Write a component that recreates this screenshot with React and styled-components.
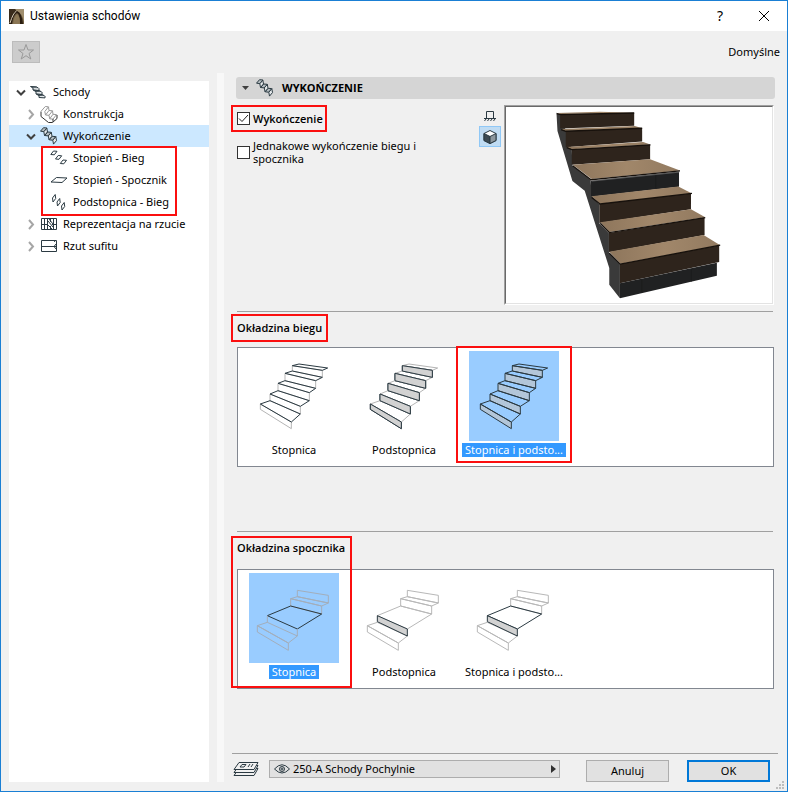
import React, { useState } from 'react';
import styled, { createGlobalStyle, css } from 'styled-components';

const Global = createGlobalStyle`
  * { box-sizing: border-box; }
  body { margin: 0; background: #f0f0f0; }
  body, button, select, input { font-family: "Noto Sans", "Open Sans", sans-serif; font-size: 11px; line-height: 14px; color: #000; }
  button { border: 0; padding: 0; background: none; }
  svg { display: block; flex: none; }
`;

const Window = styled.div`
  display: flex;
  flex-direction: column;
  min-height: 100vh;
  border: 1px solid #1a7fd4;
  background: #f0f0f0;
`;
const TitleBar = styled.header`
  display: flex;
  align-items: center;
  height: 30px;
  padding: 0 13px 0 8px;
  gap: 6px;
  background: #fff;
`;
const Title = styled.h1`
  flex: 1;
  margin: 0;
  font-size: 12px;
  font-family: Roboto, sans-serif;
  font-weight: 400;
  line-height: 16px;
`;
const CaptionButton = styled.button`
  display: grid;
  place-items: center;
  width: 20px;
  height: 20px;
  margin-left: 18px;
  font-size: 14px;
`;
const Toolbar = styled.div`
  display: flex;
  align-items: center;
  justify-content: space-between;
  height: 42px;
  padding: 0 7px 0 11px;
`;
const FavouriteButton = styled.button`
  display: grid;
  place-items: center;
  width: 28px;
  height: 22px;
  border: 1px solid #bcbcbc;
  background: #ccc;
`;
const Body = styled.div`
  display: flex;
  flex: 1;
  padding: 0 0 9px 8px;
`;
const Tree = styled.nav`
  width: 200px;
  margin-top: 8px;
  background: #fff;
`;
const TreeGroup = styled.div`
  position: relative;
`;
const TreeRow = styled.button`
  display: flex;
  align-items: center;
  width: 100%;
  height: 22px;
  padding-left: ${(p) => 6 + p.$level * 10}px;
  background: ${(p) => (p.$selected ? '#cce8ff' : 'transparent')};
  text-align: left;
`;
const Twisty = styled.span`
  width: 12px;
  margin-right: 3px;
`;
const TreeIcon = styled.span`
  width: ${(p) => (p.$root ? 16 : 18)}px;
  margin-right: ${(p) => (p.$root ? 7 : 5)}px;
`;
const Splitter = styled.div`
  width: 7px;
  margin-left: 8px;
  background: #f8f8f8;
`;
const Main = styled.main`
  display: flex;
  flex: 1;
  flex-direction: column;
  min-width: 0;
  padding: 4px 9px 0 8px;
`;
const PanelHeader = styled.button`
  display: flex;
  align-items: center;
  height: 22px;
  margin: 0 3px 0 4px;
  padding-left: 5px;
  border-radius: 3px;
  background: #d5d5d5;
  font-family: "Open Sans", sans-serif;
  font-weight: 700;
`;
const HeaderIcon = styled.span`
  margin: 0 8px 0 6px;
`;
const Section = styled.section`
  margin: 0 5px;
  padding-bottom: ${(p) => p.$space}px;
  border-bottom: ${(p) => (p.$last ? '0' : '1px solid #a0a0a0')};
`;
const Finish = styled.div`
  display: flex;
  padding-top: 6px;
`;
const Options = styled.div`
  flex: 1;
  min-width: 0;
  padding-top: 7px;
`;
const CheckLabel = styled.label`
  position: relative;
  display: flex;
  align-items: center;
  gap: 3px;
  max-width: 196px;
  margin-bottom: 14px;
  line-height: 13px;
  ${(p) => p.$bold && css`font-family: "Open Sans", sans-serif; font-weight: 600;`}
`;
const CheckBox = styled.input`
  appearance: none;
  flex: none;
  width: 13px;
  height: 13px;
  margin: 0;
  border: 1px solid #333;
  background: #fff;
  &:checked {
    background: #fff url("data:image/svg+xml,%3Csvg xmlns='http://www.w3.org/2000/svg' viewBox='0 0 11 11'%3E%3Cpath d='M1 5.5l3 3 6-6.500' fill='none' stroke='%23222'/%3E%3C/svg%3E");
  }
`;
const ViewModes = styled.div`
  display: flex;
  flex-direction: column;
  margin-right: 3px;
`;
const ViewButton = styled.button`
  display: grid;
  place-items: center;
  width: 22px;
  height: 21px;
  border: 1px solid ${(p) => (p.$active ? '#90c8f6' : 'transparent')};
  background: ${(p) => (p.$active ? '#c0dcf3' : 'transparent')};
`;
const Preview = styled.div`
  width: 270px;
  height: 200px;
  margin-right: -1px;
  border: 1px solid;
  border-color: #a0a0a0 #fff #fff #a0a0a0;
  background: #fff;
`;
const PreviewInner = styled.div`
  border: 1px solid;
  border-color: #696969 #e3e3e3 #e3e3e3 #696969;
`;
const SectionTitle = styled.h2`
  margin: 0;
  padding: 9px 0 12px;
  font-family: "Open Sans", sans-serif;
  font-size: 11px;
  font-weight: 600;
  line-height: 14px;
`;
const TitleMark = styled.span`
  position: relative;
`;
const TileList = styled.div`
  position: relative;
  display: flex;
  height: 120px;
  margin-top: ${(p) => p.$gap}px;
  margin-right: -1px;
  padding: 3px 1px;
  border: 1px solid #828790;
  background: #fff;
`;
const Tile = styled.button`
  position: relative;
  display: flex;
  flex-direction: column;
  align-items: center;
  gap: 2px;
  width: 110px;
`;
const TileImage = styled.span`
  width: 90px;
  height: 90px;
  background: ${(p) => (p.$selected ? '#99ccff' : 'transparent')};
`;
const TileLabel = styled.span`
  padding: 0 3px;
  line-height: 14px;
  white-space: nowrap;
  ${(p) => p.$selected && css`background: #3399ff; color: #fff;`}
`;
const Mark = styled.span`
  position: absolute;
  inset: ${(p) => p.$inset};
  z-index: 2;
  border: 2px solid #fb0f0f;
  pointer-events: none;
`;
const Footer = styled.footer`
  display: flex;
  align-items: flex-start;
  margin-top: auto;
  padding-top: 6px;
  border-top: 1px solid #a0a0a0;
`;
const LayerBox = styled.label`
  display: flex;
  align-items: center;
  flex: 0 1 291px;
  height: 18px;
  margin: 0 26px 0 9px;
  padding: 0 3px 0 4px;
  border: 1px solid #adadad;
  background: #e1e1e1;
`;
const LayerSelect = styled.select`
  appearance: none;
  flex: 1;
  min-width: 0;
  padding: 0 0 0 3px;
  border: 0;
  background: transparent;
`;
const DialogButton = styled.button`
  width: 83px;
  height: 22px;
  margin-right: ${(p) => (p.$primary ? 8 : 18)}px;
  border: ${(p) => (p.$primary ? '2px solid #0078d7' : '1px solid #adadad')};
  background: #e1e1e1;
`;
const Grip = styled.span`
  position: absolute;
  right: 4px;
  bottom: 3px;
`;
const Frame = styled.div`
  position: relative;
`;

const INK = '#2b3a42';

const Arrow = ({ open }) => (
  <svg width="12" height="12" viewBox="0 0 12 12" fill="none" strokeWidth="2" stroke={open ? '#404040' : '#a6a6a6'}>
    <path d={open ? 'M2 4.500l4 4 4-4' : 'M4 2l4 4.500-4 4.500'} />
  </svg>
);

const FlightIcon = () => (
  <svg width="18" height="18" viewBox="0 0 18 18" stroke={INK} strokeLinejoin="round">
    <path d="M3.800 4.600l3-3.600.7 4-3 3.500zM8.300 8.900l3-3.600.7 4-3 3.500zM12.800 13.200l3-3.600.7 4-3 3.500z" fill="#e4e8ea" />
    <path d="M.500 4.200l3-3.500 3.500.3-3.200 3.600zM4.700 8.500l3-3.500 3.500.3-3 3.600zM9.200 12.800l3-3.500 3.500.3-3 3.600z" fill="#b4bcc0" />
  </svg>
);

const icons = {
  stairs: (
    <svg width="16" height="14" viewBox="0 0 16 14" stroke={INK} fill="#a3abaf" strokeLinejoin="round">
      <path d="M.500 1.500l6 .3 2 1.500-5.500-.3z" />
      <path d="M3 3v2l6 .7V3.300" fill="#e4e8ea" />
      <path d="M3.500 5.200l6 .3 2 1.500-5.500-.3z" />
      <path d="M6 7v2l6 .6V7" fill="#e4e8ea" />
      <path d="M6.500 9.200l6 .3 2 1.500-5.500-.3z" />
      <path d="M9 11v1.500l6 .4V11" fill="#e4e8ea" />
    </svg>
  ),
  structure: (
    <svg width="18" height="18" viewBox="0 0 18 18" fill="#fff" strokeLinejoin="round">
      <path d="M1 6l4-4.500 3.500.5.5 3 3.500.5.5 3 3.500.5.5 4-4 4.500H9L1.500 11z" stroke="none" />
      <path d="M1.300 6l4-4.500 3.200.3-3.700 4.700.7 3.500 3.500-4.500-.5-3.500M9 5.500l3.500.3-3.500 4.500-3.500-.3M9 10.300l.7 3.500 3.300-4.500-.5-3.500M13 9.300l3.500.3-3.500 4.500-3.300-.3" stroke="#999" fill="none" />
      <path d="M1 6.500v5l7.500 6h4l4.500-4v-3.500M13 17v-3" stroke="#333" fill="none" />
    </svg>
  ),
  finish: <FlightIcon />,
  treads: (
    <svg width="18" height="18" viewBox="0 0 18 18" fill="#fff" stroke={INK}>
      <path d="M.800 5.500l2.700-3.500 3.500.3-2.700 3.500zM5.500 10l2.700-3.500 3.500.3L9 10.300zM10.300 14.500l2.700-3.500 3.500.3-2.700 3.500z" />
    </svg>
  ),
  landing: (
    <svg width="18" height="18" viewBox="0 0 18 18" fill="#fff" stroke={INK}>
      <path d="M1 11l5.500-4.500L17 7l-5 4.500z" />
    </svg>
  ),
  risers: (
    <svg width="18" height="18" viewBox="0 0 18 18" fill="#fff" stroke={INK}>
      <path d="M2.500 5l2.700-3.500.5 4L3 9zM7 9l2.700-3.500.5 4L7.500 13zM11.500 13l2.700-3.500.5 4L12 17z" />
    </svg>
  ),
  plan: (
    <svg width="18" height="14" viewBox="0 0 18 14" fill="none" stroke={INK}>
      <path d="M1.500 1.500h15v11h-15zM4.500 1v12M7.500 1v12M10.500 1v4M10.500 9v4M13.500 1v12M1 7.500h7M12 7.500h5M8 4l5 6M9 2l4 5M8 8l4 4" />
    </svg>
  ),
  ceiling: (
    <svg width="18" height="14" viewBox="0 0 18 14" fill="none" stroke={INK}>
      <path d="M1.500 1.500h15v11h-15zM1 7.500h15M13.500 1l1.500 2M16 5l-2 2.500 2 2.500" />
    </svg>
  ),
};

const flightRisers = [
  '130,44 220,58 220,79 130,60',
  '108,67 200,89 200,112 108,89',
  '87,97 181,125 181,149 87,119',
  '63,129 154,166 154,189 63,149',
  '34,159 127,213 127,233 34,175',
];
const flightTreads = [
  '130,44 150,39 236,51 220,58',
  '130,60 108,67 200,89 220,79',
  '108,89 87,97 181,125 200,112',
  '87,119 63,129 154,166 181,149',
  '63,149 34,159 127,213 154,189',
];
const landingParts = [
  '145,52 238,67 238,90 145,71',
  '145,71 125,77 218,99 238,90',
  '125,77 125,99 218,123 218,99',
  '55,148 25,158 118,210 145,189',
  '25,158 118,210 118,232 25,177',
];

const polys = (list, props) => list.map((points) => <polygon key={points} points={points} {...props} />);

function FlightDrawing({ kind, selected }) {
  const pale = { fill: 'none', stroke: '#b5b5b5' };
  const dark = { fill: 'none', stroke: INK };
  const face = { fill: selected ? '#b3c6d9' : '#d2d2d2', stroke: INK };
  return (
    <svg width="90" height="90" viewBox="0 0 270 270" strokeWidth="3" strokeLinejoin="round">
      {polys(flightRisers, kind === 'tread' ? pale : face)}
      {kind === 'riser' && polys(flightTreads, pale)}
      {kind === 'riser' && polys(flightRisers, face)}
      {kind !== 'riser' && polys(flightTreads, dark)}
    </svg>
  );
}

function LandingDrawing({ kind, selected }) {
  const pale = { fill: 'none', stroke: selected ? '#a3aebb' : '#b8b8b8' };
  const dark = { fill: 'none', stroke: INK };
  return (
    <svg width="90" height="90" viewBox="0 0 270 270" strokeWidth="3" strokeLinejoin="round">
      {polys(landingParts, pale)}
      <polygon points="125,99 218,123 145,168 55,128" {...(kind === 'riser' ? pale : dark)} />
      {kind === 'tread' ? (
        <path d="M55 128v20M145 168v21" {...pale} />
      ) : (
        <polygon points="55,128 145,168 145,189 55,146" fill="#d2d2d2" stroke={INK} />
      )}
    </svg>
  );
}

const StairsPreview = () => (
  <svg width="100%" height="196" viewBox="18 21 801 588" role="img" aria-label="Podgląd schodów">
    <defs>
      <linearGradient id="wood" x1="0" x2="1">
        <stop offset="0" stopColor="#8e765c" />
        <stop offset=".5" stopColor="#a1876a" />
        <stop offset="1" stopColor="#927a60" />
      </linearGradient>
    </defs>
    <path d="M170 37L182 42 198 90 216 147 218 196 273 240 276 290 299 313 299 370 328 400 328 458 361 493 361 596 329 555 329 505 255 272 218 243 173 92z" fill="#3a3a3a" />
    <g fill="#2e241c">
      <path d="M181 41l223-4v39l-223 9z" />
      <path d="M198 92l230-9v41l-230 17z" />
      <path d="M216 148l236-15v44l-236 17z" />
      <path d="M299 312l276-33v49l-276 41z" />
      <path d="M328 399l288-46v52l-288 52z" />
      <path d="M361 493l299-57v51l-299 64z" />
    </g>
    <path d="M274 242l265-28v46l-265 30zM361 551l292-62v39l-292 68z" fill="#202122" />
    <path d="M469 225v38M427 540v38M576 508v38" stroke="#18191a" strokeWidth="2" />
    <g fill="url(#wood)">
      <path d="M171 38l130-4 103 3-222 4z" />
      <path d="M184 86l222-9 22 7-231 8z" />
      <path d="M201 140l230-15 22 8-236 14z" />
      <path d="M219 194l233-17 90 34-266 26z" />
      <path d="M276 289l261-30 41 21-277 31z" />
      <path d="M302 367l273-39 43 24-289 44z" />
      <path d="M329 456l284-51 50 31-300 56z" />
    </g>
    <g fill="none" stroke="#17110c" strokeWidth="4">
      <path d="M171 40l11 3 222-5M184 88l14 5 230-9M201 142l15 6 237-14M219 197l55 42 268-27" />
      <path d="M276 292l25 20 277-32M302 370l27 28 289-45M329 460l33 33 301-57" />
    </g>
    <path d="M276 243l264-27" stroke="#777" strokeWidth="2" />
  </svg>
);

const treeTop = [
  { label: 'Schody', icon: 'stairs', level: 0, open: true },
  { label: 'Konstrukcja', icon: 'structure', level: 1 },
  { label: 'Wykończenie', icon: 'finish', level: 1, open: true, selected: true },
];
const treeMarked = [
  { label: 'Stopień - Bieg', icon: 'treads', level: 2, leaf: true },
  { label: 'Stopień - Spocznik', icon: 'landing', level: 2, leaf: true },
  { label: 'Podstopnica - Bieg', icon: 'risers', level: 2, leaf: true },
];
const treeBottom = [
  { label: 'Reprezentacja na rzucie', icon: 'plan', level: 1 },
  { label: 'Rzut sufitu', icon: 'ceiling', level: 1 },
];

const TreeItem = ({ item }) => (
  <TreeRow $level={item.level} $selected={item.selected}>
    <Twisty>{!item.leaf && <Arrow open={item.open} />}</Twisty>
    <TreeIcon $root={item.level === 0}>{icons[item.icon]}</TreeIcon>
    {item.label}
  </TreeRow>
);

const tiles = [
  { kind: 'tread', label: 'Stopnica' },
  { kind: 'riser', label: 'Podstopnica' },
  { kind: 'both', label: 'Stopnica i podsto...' },
];

function Tiles({ drawing: Drawing, initial, mark, gap }) {
  const [value, setValue] = useState(initial);
  return (
    <TileList $gap={gap}>
      {tiles.map(({ kind, label }) => (
        <Tile key={kind} aria-pressed={value === kind} onClick={() => setValue(kind)}>
          <TileImage $selected={value === kind}>
            <Drawing kind={kind} selected={value === kind} />
          </TileImage>
          <TileLabel $selected={value === kind}>{label}</TileLabel>
          {mark && initial === kind && <Mark $inset={mark} />}
        </Tile>
      ))}
    </TileList>
  );
}

export default function App() {
  return (
    <Frame>
      <Global />
      <Window>
        <TitleBar>
          <svg width="15" height="15" viewBox="0 0 15 15">
            <path d="M0 0h15v15H0z" fill="#6d5c42" />
            <path d="M0 0h8L0 14z" fill="#3a2c1c" />
            <path d="M8 2q5 2 7 11V0H6z" fill="#a08e6e" />
            <path d="M0 15Q3 2 8 2q5 2 6 13h-3Q11 5 8 4 4 6 3 15z" fill="#2a1d10" />
            <path d="M4 15Q5 7 8 5q3 2 3 10z" fill="#8a7654" />
            <path d="M1 14Q4 4 7.500 2" stroke="#d8cfbb" fill="none" />
          </svg>
          <Title>Ustawienia schodów</Title>
          <CaptionButton aria-label="Pomoc">?</CaptionButton>
          <CaptionButton aria-label="Zamknij">
            <svg width="12" height="12" viewBox="0 0 12 12" stroke="#000"><path d="M1 1l10 10M11 1L1 11" /></svg>
          </CaptionButton>
        </TitleBar>
        <Toolbar>
          <FavouriteButton aria-label="Ulubione">
            <svg width="18" height="18" viewBox="0 0 18 18" fill="none" stroke="#999">
              <path d="M9 1.500l2 5.500h5.500l-4.500 3.500 1.800 5.500L9 12.700 4.200 16 6 10.500 1.500 7H7z" />
            </svg>
          </FavouriteButton>
          <span>Domyślne</span>
        </Toolbar>
        <Body>
          <Tree aria-label="Ustawienia">
            {treeTop.map((item) => <TreeItem key={item.label} item={item} />)}
            <TreeGroup>
              {treeMarked.map((item) => <TreeItem key={item.label} item={item} />)}
              <Mark $inset="-1px 32px -3px 32px" />
            </TreeGroup>
            {treeBottom.map((item) => <TreeItem key={item.label} item={item} />)}
          </Tree>
          <Splitter />
          <Main>
            <PanelHeader aria-expanded="true">
              <svg width="9" height="6" viewBox="0 0 9 6"><path d="M1 1h7L4.500 5z" fill="#404040" /></svg>
              <HeaderIcon><FlightIcon /></HeaderIcon>
              WYKOŃCZENIE
            </PanelHeader>
            <Section $space={6}>
              <Finish>
                <Options>
                  <CheckLabel $bold>
                    <CheckBox type="checkbox" defaultChecked />
                    Wykończenie
                    <Mark $inset="-7px 106px -7px -6px" />
                  </CheckLabel>
                  <CheckLabel>
                    <CheckBox type="checkbox" />
                    Jednakowe wykończenie biegu i spocznika
                  </CheckLabel>
                </Options>
                <ViewModes>
                  <ViewButton aria-label="Widok 2D">
                    <svg width="12" height="12" viewBox="0 0 12 12" fill="none" stroke={INK}>
                      <path d="M2.500 8V1.500h7V8M0 8.500h12M2 9l-1.500 2M5 9l-1.500 2M8 9l-1.500 2M11 9l-1.500 2" />
                    </svg>
                  </ViewButton>
                  <ViewButton $active aria-label="Widok 3D">
                    <svg width="14" height="16" viewBox="0 0 14 16" stroke={INK} strokeLinejoin="round">
                      <path d="M1 4.500l6-3 6 3v7l-6 3-6-3z" fill="#fff" />
                      <path d="M1 4.500l6 3v7l-6-3z" fill="#3d4a52" />
                      <path d="M7 7.500l6-3v7l-6 3z" fill="#8d979d" />
                    </svg>
                  </ViewButton>
                </ViewModes>
                <Preview><PreviewInner><StairsPreview /></PreviewInner></Preview>
              </Finish>
            </Section>
            <Section $space={64}>
              <SectionTitle><TitleMark>Okładzina biegu<Mark $inset="-6px -6px -7px -6px" /></TitleMark></SectionTitle>
              <Tiles drawing={FlightDrawing} initial="both" mark="-5px -3px 0 -3px" gap={0} />
            </Section>
            <Section $last>
              <SectionTitle>Okładzina spocznika</SectionTitle>
              <Tiles drawing={LandingDrawing} initial="tread" mark="-37px -3px -3px -8px" gap={2} />
            </Section>
            <Footer>
              <svg width="28" height="17" viewBox="0 0 28 17" fill="#f0f0f0" stroke={INK} strokeLinejoin="round">
                <path d="M2 15.500l5-7h19l-4 7z" />
                <path d="M2 12.500l5-7h19l-4 7z" />
                <path d="M2 9.500l5-7h19l-4 7z" />
                <path d="M8 7l2-2.500h4L12 7zM16 7l2-3M19 7l2-3" />
              </svg>
              <LayerBox>
                <svg width="16" height="12" viewBox="0 0 16 12" fill="none" stroke={INK}>
                  <path d="M.500 6Q8-2.500 15.500 6 8 14 .500 6z" />
                  <circle cx="8" cy="6" r="2.500" />
                  <circle cx="8" cy="6" r="1" />
                </svg>
                <LayerSelect aria-label="Warstwa">
                  <option>250-A Schody Pochylnie</option>
                </LayerSelect>
                <svg width="5" height="8" viewBox="0 0 5 8"><path d="M0 0l5 4-5 4z" fill="#303030" /></svg>
              </LayerBox>
              <DialogButton>Anuluj</DialogButton>
              <DialogButton $primary>OK</DialogButton>
            </Footer>
          </Main>
        </Body>
      </Window>
      <Grip>
        <svg width="8" height="8" viewBox="0 0 8 8" fill="#bdbdbd"><path d="M6 0h2v2H6zM3 3h2v2H3zM6 3h2v2H6zM0 6h2v2H0zM3 6h2v2H3zM6 6h2v2H6z" /></svg>
      </Grip>
    </Frame>
  );
}
